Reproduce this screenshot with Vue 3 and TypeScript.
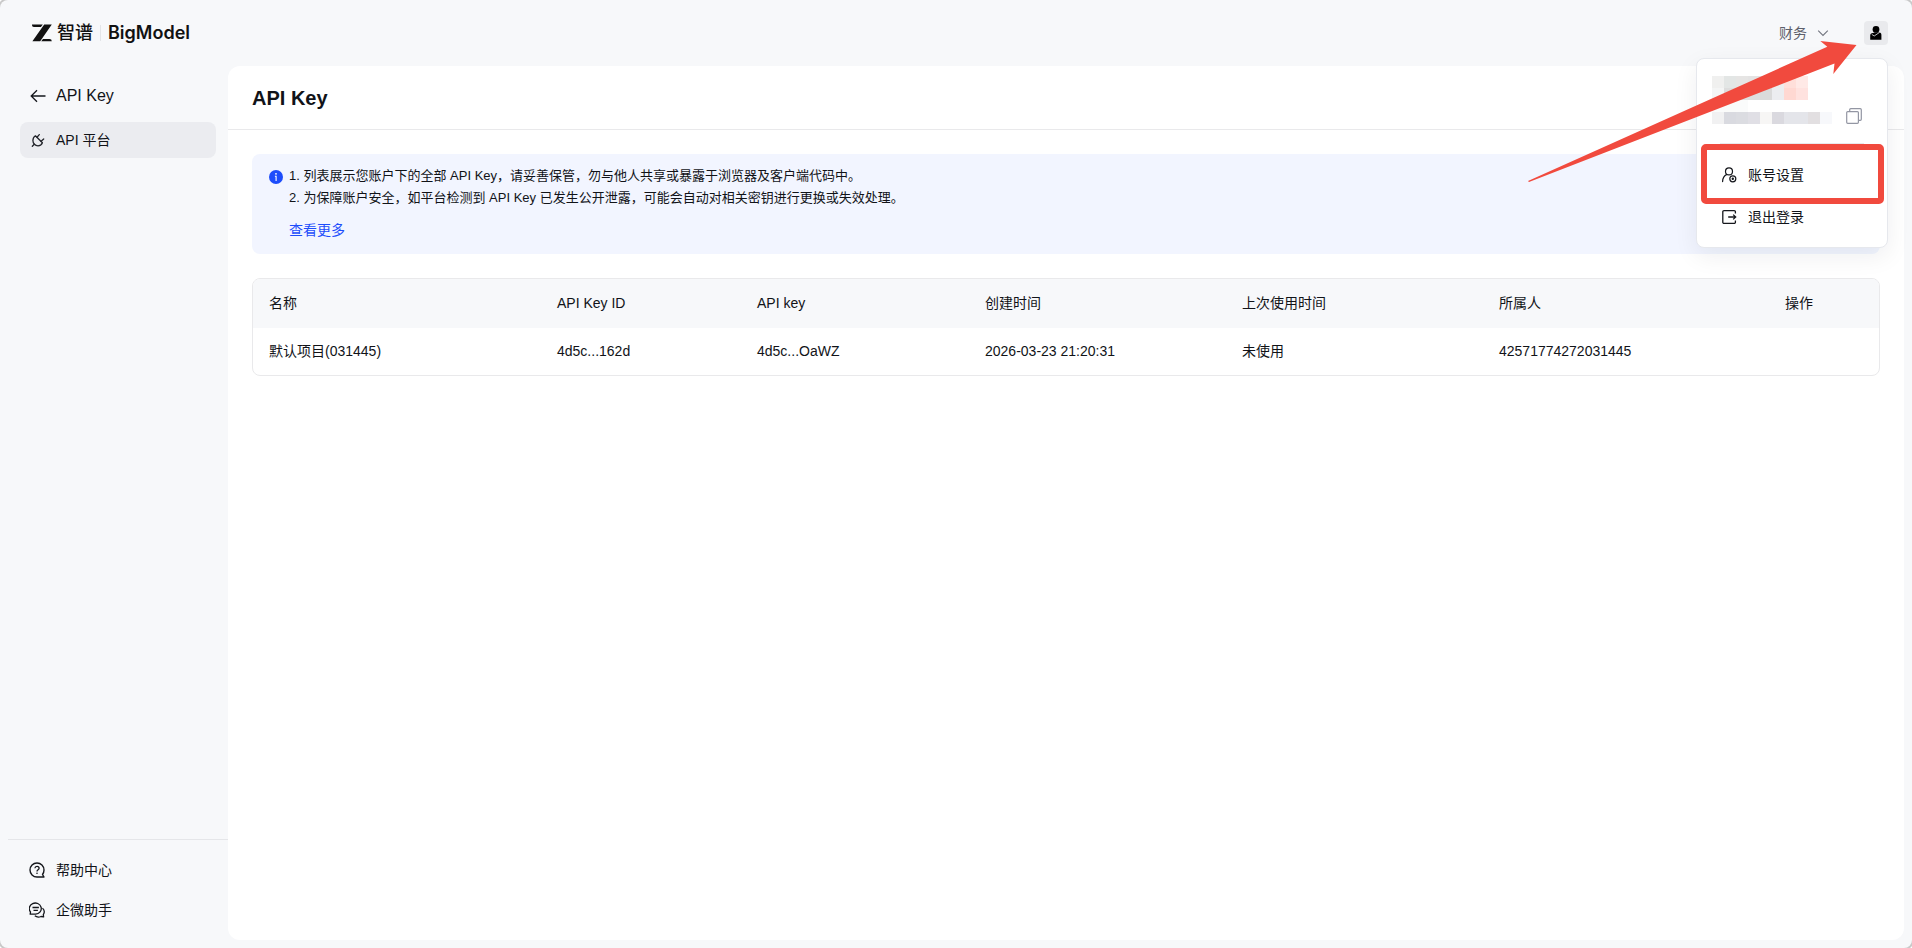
<script setup lang="ts">
interface ApiKeyRow {
  name: string
  id: string
  key: string
  createdAt: string
  lastUsed: string
  owner: string
}

const columns: { label: string; kind: string }[] = [
  { label: '名称', kind: 'col-name' },
  { label: 'API Key ID', kind: 'col-id' },
  { label: 'API key', kind: 'col-key' },
  { label: '创建时间', kind: 'col-time' },
  { label: '上次使用时间', kind: 'col-time' },
  { label: '所属人', kind: 'col-owner' },
  { label: '操作', kind: 'col-action' },
]

const rows: ApiKeyRow[] = [
  {
    name: '默认项目(031445)',
    id: '4d5c...162d',
    key: '4d5c...OaWZ',
    createdAt: '2026-03-23 21:20:31',
    lastUsed: '未使用',
    owner: '42571774272031445',
  },
]

const notices: string[] = [
  '1. 列表展示您账户下的全部 API Key，请妥善保管，勿与他人共享或暴露于浏览器及客户端代码中。',
  '2. 为保障账户安全，如平台检测到 API Key 已发生公开泄露，可能会自动对相关密钥进行更换或失效处理。',
]

// Masked account name and id, one colour per 12px cell
const maskRows: string[][] = [
  ['#f0f0ef', '#e3e6e5', '#e6e5e4', '#e4e3e3', '#e5e5e5', '#ededee', '#ffdfda', '#ffe9e6'],
  ['#f4f5f5', '#dddddd', '#e0e0e0', '#dedede', '#dadada', '#ecedf0', '#ffd8d2', '#ffe2df'],
  ['#fafbfb', '#fafbfa', '#fafbfb'],
  ['#f1f1f2', '#d9dae0', '#dbdce1', '#e0dfe5', '#f7f6f5', '#dad9df', '#e4e5ea', '#e4e5ea', '#e2dfe1', '#f7f8fb'],
]
</script>

<template>
  <div class="page">
    <header class="topbar">
      <a class="brand" href="#">
        <svg class="brand-mark" width="20" height="18" viewBox="0 0 20 18" aria-hidden="true">
          <path d="M0 .5h10.8L8.9 3.1H2.4A2.4 2.4 0 0 1 0 .5zM12.2.5h7.6L8.2 17.3H.4zM11 14.9h6.4a2.4 2.4 0 0 1 2.4 2.4H9.2z" fill="#111" />
        </svg>
        <span class="brand-cn">智谱</span>
        <span class="brand-rule"></span>
        <span class="brand-en">BigModel</span>
      </a>

      <div class="top-actions">
        <button class="finance" type="button">
          财务
          <svg width="12" height="12" viewBox="0 0 12 12" fill="none" stroke="#72757f" stroke-width="1.1" aria-hidden="true">
            <path d="M1.2 3.6 6 8.4l4.8-4.8" />
          </svg>
        </button>
        <button class="avatar" type="button" aria-label="账户">
          <svg width="14" height="14" viewBox="0 0 14 14" aria-hidden="true">
            <circle cx="7" cy="3.4" r="3.4" fill="#000" />
            <path d="M1.2 13.8V9.5Q1.2 7 3.8 7L9.5 6.2Q12.4 6.2 12.4 8.8V13.8z" fill="#000" />
            <path d="M2.8 8.4 5.2 10 10.6 6.4" fill="none" stroke="#e9eaed" stroke-width=".8" />
          </svg>
        </button>
      </div>

      <div class="menu">
        <div class="identity">
          <div class="mask">
            <div v-for="(line, r) in maskRows" :key="r" class="mask-row">
              <i v-for="(color, c) in line" :key="c" :style="{ background: color }"></i>
            </div>
          </div>
          <button class="copy" type="button" aria-label="复制">
            <svg width="16" height="16" viewBox="0 0 16 16" fill="none" stroke="#9396a3" stroke-width="1.2" aria-hidden="true">
              <rect x=".7" y="3.6" width="11.7" height="11.7" rx="1" />
              <path d="M3.7 3.5V1.7a1 1 0 0 1 1-1h9.6a1 1 0 0 1 1 1v9.6a1 1 0 0 1-1 1h-1.8" />
            </svg>
          </button>
        </div>
        <nav class="menu-list">
          <a class="menu-item marked" href="#">
            <svg width="16" height="16" viewBox="0 0 16 16" fill="none" stroke="#15171c" stroke-width="1.2" stroke-linecap="round" aria-hidden="true">
              <circle cx="8" cy="4.4" r="3.5" />
              <path d="M1.6 14.6c.1-3.600 1.500-6 4.300-7.200" />
              <circle cx="11.800" cy="11.800" r="3" />
              <circle cx="11.800" cy="11.800" r=".6" />
            </svg>
            账号设置
          </a>
          <a class="menu-item" href="#">
            <svg width="16" height="16" viewBox="0 0 16 16" fill="none" stroke="#15171c" stroke-width="1.3" aria-hidden="true">
              <path d="M14.400 4.400V2.800a1.200 1.200 0 0 0-1.200-1.200H3a1.200 1.200 0 0 0-1.200 1.200v10.400A1.200 1.200 0 0 0 3 14.400h10.200a1.200 1.200 0 0 0 1.200-1.200v-1.600M7.200 8h7.400M12.200 5.600 14.700 8l-2.500 2.400" />
            </svg>
            退出登录
          </a>
        </nav>
      </div>

      <svg class="pointer" width="330" height="142" viewBox="0 0 330 142" aria-hidden="true">
        <path d="M0 141 299.3 6.7 292.3 1 328.5 5 305.3 34 306.5 23.5 1 142z" fill="#f14a3e" />
      </svg>
    </header>

    <div class="body">
      <aside class="sidebar">
        <a class="back" href="#">
          <svg width="16" height="16" viewBox="0 0 16 16" fill="none" stroke="#15171c" stroke-width="1.3" aria-hidden="true">
            <path d="M15.500 8H1.200M7 2.300 1.200 8 7 13.700" />
          </svg>
          API Key
        </a>
        <a class="nav-item" href="#">
          <svg width="16" height="16" viewBox="0 0 16 16" fill="none" stroke="#22242a" stroke-width="1.3" stroke-linecap="round" stroke-linejoin="round" aria-hidden="true">
            <path d="M5.400 3.800 12.400 10.800C11.600 13 9.900 13.800 8 13.800A5.200 5.200 0 0 1 2.900 8.600C2.900 6.500 3.900 4.700 5.400 3.800z" />
            <path d="M4.300 12.300 2.300 14.300M7 5.200 9.300 2.600M11.100 9.200 13.700 6.900" />
          </svg>
          API 平台
        </a>
        <div class="support">
          <a class="support-item" href="#">
            <svg width="16" height="16" viewBox="0 0 16 16" fill="none" stroke="#15171c" stroke-width="1.4" aria-hidden="true">
              <path d="M15 15H8A7 7 0 1 1 15 8c0 1.900-.6 3.300-1.500 4.500z" stroke-linejoin="round" />
              <path d="M5.900 6.200C6 4.900 6.900 4.300 8 4.300s2.100.7 2.100 1.900c0 1.500-2.100 1.600-2.100 3.200" stroke-width="1.3" />
              <circle cx="8" cy="11.300" r=".8" fill="#15171c" stroke="none" />
            </svg>
            帮助中心
          </a>
          <a class="support-item" href="#">
            <svg width="16" height="16" viewBox="0 0 16 16" fill="none" stroke="#15171c" stroke-width="1.3" stroke-linejoin="round" aria-hidden="true">
              <path d="M1.200 12.200 1.500 10A6 5.600 0 1 1 6.600 12.200z" />
              <path d="M3.500 5.500h6.400M4.500 8.300h4.400" />
              <path d="M5.800 13.800c1.700 1.300 4.200 1.500 6.200.7l2.600.4-.3-2.300c1.300-2 1-4.800-.8-6.500" />
            </svg>
            企微助手
          </a>
        </div>
      </aside>

      <main class="panel">
        <h1 class="panel-title">API Key</h1>
        <div class="content">
          <section class="notice">
            <svg class="notice-icon" width="16" height="16" viewBox="0 0 16 16" aria-hidden="true">
              <circle cx="8" cy="8" r="7" fill="#1d4dfb" />
              <circle cx="8" cy="4.800" r=".9" fill="#fff" />
              <path d="M6.900 7.200h1.200V12" fill="none" stroke="#fff" stroke-width="1.1" />
            </svg>
            <div class="notice-text">
              <p v-for="line in notices" :key="line">{{ line }}</p>
              <a class="more" href="#">查看更多</a>
            </div>
          </section>

          <div class="table-frame">
            <table>
              <thead>
                <tr>
                  <th v-for="col in columns" :key="col.label" :class="col.kind" scope="col">{{ col.label }}</th>
                </tr>
              </thead>
              <tbody>
                <tr v-for="row in rows" :key="row.id">
                  <td>{{ row.name }}</td>
                  <td>{{ row.id }}</td>
                  <td>{{ row.key }}</td>
                  <td>{{ row.createdAt }}</td>
                  <td>{{ row.lastUsed }}</td>
                  <td>{{ row.owner }}</td>
                  <td></td>
                </tr>
              </tbody>
            </table>
          </div>
        </div>
      </main>
    </div>
  </div>
</template>

<style>
body {
  margin: 0;
  background: #fff;
}
</style>

<style scoped>
* {
  box-sizing: border-box;
}

.page {
  position: relative;
  display: flex;
  flex-direction: column;
  min-height: 100vh;
  background: #f7f8fa;
  border-radius: 8px;
  box-shadow: 0 0 0 2px #c9c9c9;
  color: #111318;
  font-family: "Liberation Sans", "Noto Sans CJK SC", sans-serif;
  font-size: 14px;
  line-height: 22px;
}

a {
  color: inherit;
  text-decoration: none;
}

button {
  padding: 0;
  border: 0;
  background: none;
  color: inherit;
  font: inherit;
  cursor: pointer;
}

svg {
  display: block;
  flex: none;
}

.topbar {
  display: flex;
  align-items: center;
  justify-content: space-between;
  height: 66px;
  padding: 0 24px 0 32px;
}

.brand {
  display: flex;
  align-items: center;
  color: #111;
}

.brand-cn {
  margin-left: 5px;
  font-size: 18px;
  font-weight: 500;
}

.brand-rule {
  width: 1px;
  height: 16px;
  margin: 0 7px;
  background: #e3e5e8;
}

.brand-en {
  font-family: Inter, sans-serif;
  font-size: 18px;
  font-weight: 600;
}

.top-actions {
  display: flex;
  align-items: center;
  gap: 35px;
}

.finance {
  display: flex;
  align-items: center;
  gap: 10px;
  color: #5d606b;
}

.avatar {
  display: flex;
  align-items: center;
  justify-content: center;
  width: 24px;
  height: 24px;
  border-radius: 4px;
  background: #e9eaed;
}

.menu {
  position: absolute;
  z-index: 2;
  top: 58px;
  right: 24px;
  width: 192px;
  padding: 17px 0 9px;
  border: 1px solid #e6e8ed;
  border-radius: 8px;
  background: #fff;
  box-shadow: 0 8px 24px rgba(20, 24, 40, 0.07);
}

.identity {
  display: flex;
  align-items: flex-end;
  justify-content: space-between;
  margin: 0 23px;
  padding-bottom: 19px;
  border-bottom: 1px solid #e9e9ec;
}

.mask {
  margin-left: -8px;
}

.mask-row {
  display: flex;
}

.mask-row i {
  width: 12px;
  height: 12px;
}

.copy {
  margin-right: 2px;
}

.menu-list {
  display: flex;
  flex-direction: column;
  padding-top: 10px;
}

.menu-item {
  position: relative;
  display: flex;
  align-items: center;
  gap: 11px;
  height: 42px;
  padding: 0 24px;
}

.marked::after {
  content: "";
  position: absolute;
  inset: -10px 3px -8px 4px;
  border: 6px solid #f14a3e;
  border-radius: 5px;
}

.pointer {
  position: absolute;
  z-index: 3;
  top: 40px;
  right: 54px;
  pointer-events: none;
}

.body {
  display: flex;
  flex: 1;
  padding: 0 8px 8px 0;
}

.sidebar {
  display: flex;
  flex: none;
  flex-direction: column;
  width: 228px;
}

.back {
  display: flex;
  align-items: center;
  gap: 10px;
  height: 24px;
  margin: 18px 12px 0 30px;
  font-size: 16px;
}

.nav-item {
  display: flex;
  align-items: center;
  gap: 10px;
  height: 36px;
  margin: 14px 12px 0 20px;
  padding: 0 10px;
  border-radius: 8px;
  background: #ebecf0;
}

.support {
  display: flex;
  flex-direction: column;
  margin: auto 0 0 8px;
  padding: 10px 0 10px 21px;
  border-top: 1px solid #e5e6e9;
}

.support-item {
  display: flex;
  align-items: center;
  gap: 11px;
  height: 40px;
}

.panel {
  flex: 1;
  min-width: 0;
  border-radius: 12px;
  background: #fff;
}

.panel-title {
  margin: 0;
  padding: 20px 24px 19px;
  border-bottom: 1px solid #e9e9eb;
  font-size: 20px;
  font-weight: 700;
  line-height: 24px;
}

.content {
  display: flex;
  flex-direction: column;
  gap: 24px;
  padding: 24px;
}

.notice {
  display: flex;
  gap: 5px;
  padding: 11px 16px 12px;
  border-radius: 8px;
  background: #f2f5ff;
}

.notice-icon {
  margin-top: 4px;
}

.notice-text p {
  margin: 0;
  font-size: 13px;
}

.more {
  display: inline-block;
  margin-top: 9px;
  color: #1d4dfb;
  line-height: 24px;
}

.table-frame {
  overflow: hidden;
  border: 1px solid #e9e9eb;
  border-radius: 8px;
}

table {
  width: 100%;
  border-collapse: collapse;
  table-layout: fixed;
}

th,
td {
  height: 47px;
  padding: 0 16px 2px;
  font-weight: 400;
  text-align: left;
}

th {
  height: 49px;
  background: #f7f8fa;
}

.col-name {
  width: 288px;
}

.col-id {
  width: 200px;
}

.col-key {
  width: 228px;
}

.col-time {
  width: 257px;
}

.col-owner {
  width: 286px;
}

.col-action {
  width: 110px;
}
</style>
